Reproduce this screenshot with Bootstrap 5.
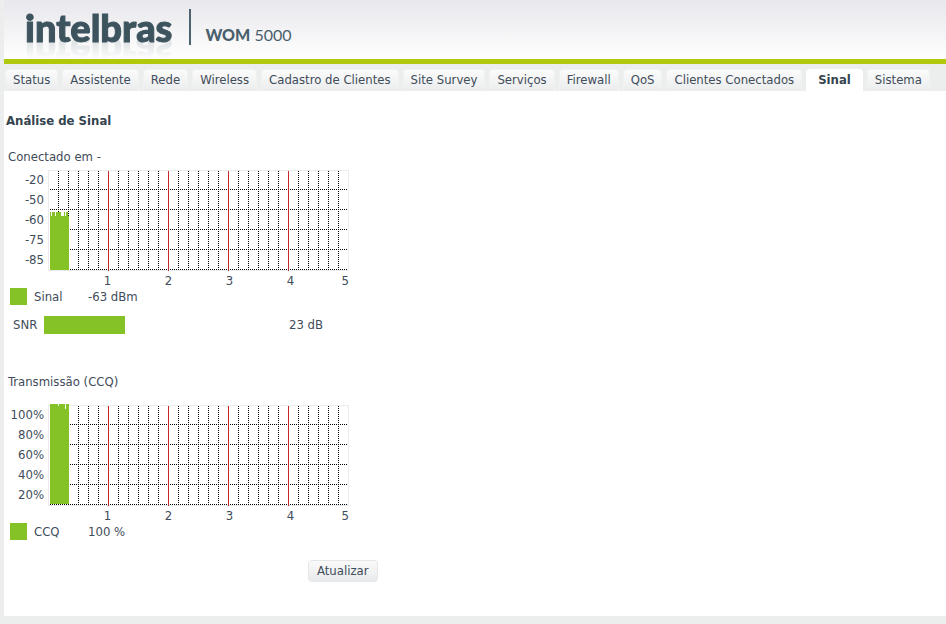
<!DOCTYPE html>
<html lang="pt-BR">
<head>
<meta charset="utf-8">
<meta name="viewport" content="width=device-width, initial-scale=1">
<title>intelbras WOM 5000 - Análise de Sinal</title>
<link href="https://cdn.jsdelivr.net/npm/bootstrap@5.3.0/dist/css/bootstrap.min.css" rel="stylesheet">
<style>
  body { background: #eceeed; color: #3f4c5a; font: 13px/20px Tahoma, "DejaVu Sans Condensed", "Noto Sans", sans-serif; }
  .page { margin: 0 0 8px 4px; }
  .brand-bar { height: 64px; border-bottom: 5px solid #b1c90c; background: linear-gradient(#e8e8ed, #f3f3f5 50%, #ffffff); padding-left: 21px; }
  .wordmark { font: 900 38px/40px Lato, sans-serif; color: #3d545f; -webkit-text-stroke: 1px #3d545f; margin-top: 7px; -webkit-box-reflect: below -15px linear-gradient(transparent 30%, rgba(0,0,0,.2)); }
  .brand-rule { width: 2px; height: 36px; background: #4c6270; margin: 9px 14px 0 17px; }
  .model { font: 16px/20px Lato, sans-serif; color: #4a5f6c; margin-top: 25px; }
  .model b { font-weight: 900; }
  .tabs { gap: 4px; padding: 5px 0 0 1px; }
  .tabs .nav-link { color: #3f4c5a; height: 22px; padding: 0 7px; border: 1px solid #f0f1f2; border-bottom: 0; border-radius: 4px 4px 0 0; background: linear-gradient(#fbfbfb, #ebeced); white-space: nowrap; }
  .tabs .nav-link.active { background: #fff; border-color: #fff; font-weight: 700; color: #34444f; padding: 0 11px; }
  .panel { min-height: 525px; padding: 20px 2px 34px; }
  .panel h1 { font-size: 13px; line-height: 20px; font-weight: 700; color: #34444f; margin: 0 0 16px; }
  .signal { width: 345px; margin: 0 2px; }
  .signal h2 { font-size: 13px; line-height: 20px; margin: 0 0 3px; }
  .signal + .signal h2 { margin-bottom: 13px; }
  .scale { width: 36px; margin-right: 4px; }
  .plot { display: block; overflow: visible; }
  .time-axis { padding-left: 69px; line-height: 20px; }
  .time-axis span { width: 61px; text-align: center; }
  .time-axis span:last-child { width: 28px; text-align: right; }
  .legend { line-height: 18px; margin-left: 2px; margin-top: -3px; }
  .swatch { width: 17px; height: 17px; background: #85c226; margin-right: 7px; }
  .legend-name { width: 54px; }
  .snr { line-height: 18px; margin: 10px 0 38px 5px; }
  .snr-label { width: 31px; }
  .snr-track { width: 245px; }
  .snr-fill { height: 18px; background: #85c226; }
  .refresh { font: inherit; color: #3f4c5a; line-height: 20px; padding: 0 8px; border: 1px solid #e4e6e8; border-radius: 4px; background: linear-gradient(#fafafa, #e9eaec); margin: 19px 0 0 302px; }
</style>
<script src="https://cdn.jsdelivr.net/npm/bootstrap@5.3.0/dist/js/bootstrap.bundle.min.js"></script>
</head>
<body>
<svg width="0" height="0" class="d-block" aria-hidden="true">
  <defs>
    <g id="grid">
      <rect x=".5" y=".5" width="300" height="100" fill="#fff" stroke="#e9ecec"/>
      <g stroke="#000" stroke-dasharray="1 1">
        <path d="M2 19.500H299M2 39.500H299M2 59.500H299M2 79.500H299M2 99.500H299"/>
        <path d="M10.500 1V100M20.500 1V100M30.500 1V100M40.500 1V100M50.500 1V100M70.500 1V100M80.500 1V100M90.500 1V100M100.500 1V100M110.500 1V100M130.500 1V100M140.500 1V100M150.500 1V100M160.500 1V100M170.500 1V100M190.500 1V100M200.500 1V100M210.500 1V100M220.500 1V100M230.500 1V100M250.500 1V100M260.500 1V100M270.500 1V100M280.500 1V100M290.500 1V100"/>
      </g>
      <path d="M60.500 1V101M120.500 1V101M180.500 1V101M240.500 1V101" stroke="#c4282a"/>
    </g>
  </defs>
</svg>
<div class="page">
  <header class="brand-bar d-flex align-items-start">
    <div class="wordmark">intelbras</div>
    <div class="brand-rule"></div>
    <div class="model"><b>WOM</b> 5000</div>
  </header>
  <nav class="nav tabs flex-nowrap" aria-label="Menu principal">
    <a class="nav-link" href="#">Status</a>
    <a class="nav-link" href="#">Assistente</a>
    <a class="nav-link" href="#">Rede</a>
    <a class="nav-link" href="#">Wireless</a>
    <a class="nav-link" href="#">Cadastro de Clientes</a>
    <a class="nav-link" href="#">Site Survey</a>
    <a class="nav-link" href="#">Serviços</a>
    <a class="nav-link" href="#">Firewall</a>
    <a class="nav-link" href="#">QoS</a>
    <a class="nav-link" href="#">Clientes Conectados</a>
    <a class="nav-link active" aria-current="page" href="#">Sinal</a>
    <a class="nav-link" href="#">Sistema</a>
  </nav>
  <main class="panel bg-white">
    <h1>Análise de Sinal</h1>
    <section class="signal">
      <h2>Conectado em -</h2>
      <div class="d-flex">
        <div class="scale d-flex flex-column text-end"><span>-20</span><span>-50</span><span>-60</span><span>-75</span><span>-85</span></div>
        <svg class="plot" width="301" height="101" role="img" aria-label="Sinal">
          <use href="#grid"/>
          <path fill="#85c226" d="M2 100V42H3V46H4V42H7V46H8V42H13V46H16V42H17V46H18V42H20V46H21V100Z"/>
        </svg>
      </div>
      <div class="time-axis d-flex"><span>1</span><span>2</span><span>3</span><span>4</span><span>5</span></div>
      <div class="legend d-flex"><span class="swatch"></span><span class="legend-name">Sinal</span><span>-63 dBm</span></div>
      <div class="snr d-flex"><span class="snr-label">SNR</span><div class="snr-track"><div class="snr-fill" style="width:33%"></div></div><span>23 dB</span></div>
    </section>
    <section class="signal">
      <h2>Transmissão (CCQ)</h2>
      <div class="d-flex">
        <div class="scale d-flex flex-column text-end"><span>100%</span><span>80%</span><span>60%</span><span>40%</span><span>20%</span></div>
        <svg class="plot" width="301" height="101" role="img" aria-label="CCQ">
          <use href="#grid"/>
          <path fill="#85c226" d="M2 99V-1H10V1H11V-1H17V4H18V-1H21V99Z"/>
        </svg>
      </div>
      <div class="time-axis d-flex"><span>1</span><span>2</span><span>3</span><span>4</span><span>5</span></div>
      <div class="legend d-flex"><span class="swatch"></span><span class="legend-name">CCQ</span><span>100 %</span></div>
    </section>
    <button type="button" class="refresh">Atualizar</button>
  </main>
</div>
</body>
</html>
